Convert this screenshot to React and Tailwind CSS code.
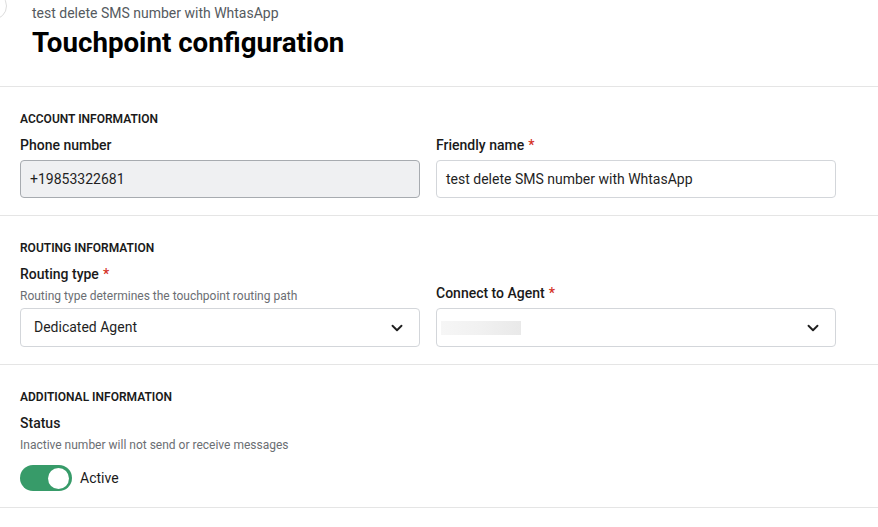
import { ChevronDown } from 'lucide-react'

function SectionTitle({ children }) {
  return (
    <h2 className="text-[12px] leading-[14px] font-semibold uppercase text-[#1a1a1a]">{children}</h2>
  )
}

function Label({ children, required }) {
  return (
    <label className="block text-[14px] leading-5 font-medium text-[#1a1a1a]">
      {children}
      {required && <span className="ml-1 text-[#d4301f]">*</span>}
    </label>
  )
}

function Select({ value, blurred }) {
  return (
    <div className="mt-[5px] h-[39px] flex items-center justify-between rounded-[4px] border border-[#d3d6da] bg-white pl-[13px] pr-[13px]">
      {blurred ? (
        <div className="-ml-[9px] h-[14px] w-[80px] bg-gradient-to-r from-[#f6f6f6] via-[#f1f1f1] to-[#e9e9e9]" />
      ) : (
        <span className="text-[14px] text-[#1f1f1f]">{value}</span>
      )}
      <ChevronDown size={18} strokeWidth={2.5} className="text-[#1f1f1f]" />
    </div>
  )
}

export default function App() {
  return (
    <div className="min-h-screen bg-white font-['Roboto','Liberation_Sans',sans-serif] text-[#1a1a1a] overflow-hidden">
      <header className="relative pl-8 pt-[3px] pb-[27px] border-b border-[#e5e5e5]">
        <button className="absolute -left-[21px] -top-[8px] w-[28px] h-[28px] rounded-full border border-[#dcdcdc] bg-white" />
        <p className="text-[14px] leading-5 text-[#555a60]">test delete SMS number with WhtasApp</p>
        <h1 className="mt-[3px] text-[27.7px] leading-[33px] font-bold text-black">Touchpoint configuration</h1>
      </header>

      <section className="px-5 pt-[25px] pb-[17px] border-b border-[#e5e5e5]">
        <SectionTitle>Account information</SectionTitle>
        <div className="mt-[9px] grid grid-cols-[400px_400px] gap-x-4">
          <div>
            <Label>Phone number</Label>
            <div className="mt-[5px] h-[38px] flex items-center rounded-[4px] border border-[#a7abb0] bg-[#eff0f2] px-[9px] text-[14px] text-[#1f1f1f]">
              +19853322681
            </div>
          </div>
          <div>
            <Label required>Friendly name</Label>
            <div className="mt-[5px] h-[38px] flex items-center rounded-[4px] border border-[#d3d6da] bg-white px-[9px] text-[14px] text-[#1f1f1f]">
              test delete SMS number with WhtasApp
            </div>
          </div>
        </div>
      </section>

      <section className="px-5 pt-[25px] pb-[17px] border-b border-[#e5e5e5]">
        <SectionTitle>Routing information</SectionTitle>
        <div className="mt-[9px] grid grid-cols-[400px_400px] gap-x-4 items-end">
          <div>
            <Label required>Routing type</Label>
            <p className="mt-[5px] text-[12px] leading-[14px] text-[#6b6e73]">Routing type determines the touchpoint routing path</p>
            <Select value="Dedicated Agent" />
          </div>
          <div>
            <Label required>Connect to Agent</Label>
            <Select blurred />
          </div>
        </div>
      </section>

      <section className="px-5 pt-[25px] pb-4 border-b border-[#e5e5e5]">
        <SectionTitle>Additional information</SectionTitle>
        <div className="mt-[9px]">
          <Label>Status</Label>
          <p className="mt-[5px] text-[12px] leading-[14px] text-[#6b6e73]">Inactive number will not send or receive messages</p>
          <div className="mt-[13px] flex items-center gap-2">
            <div className="w-[52px] h-[26px] rounded-full bg-[#379b69] flex items-center justify-end pr-[3px]">
              <div className="w-[21px] h-[21px] rounded-full bg-white" />
            </div>
            <span className="text-[14px] text-[#1a1a1a]">Active</span>
          </div>
        </div>
      </section>
    </div>
  )
}
